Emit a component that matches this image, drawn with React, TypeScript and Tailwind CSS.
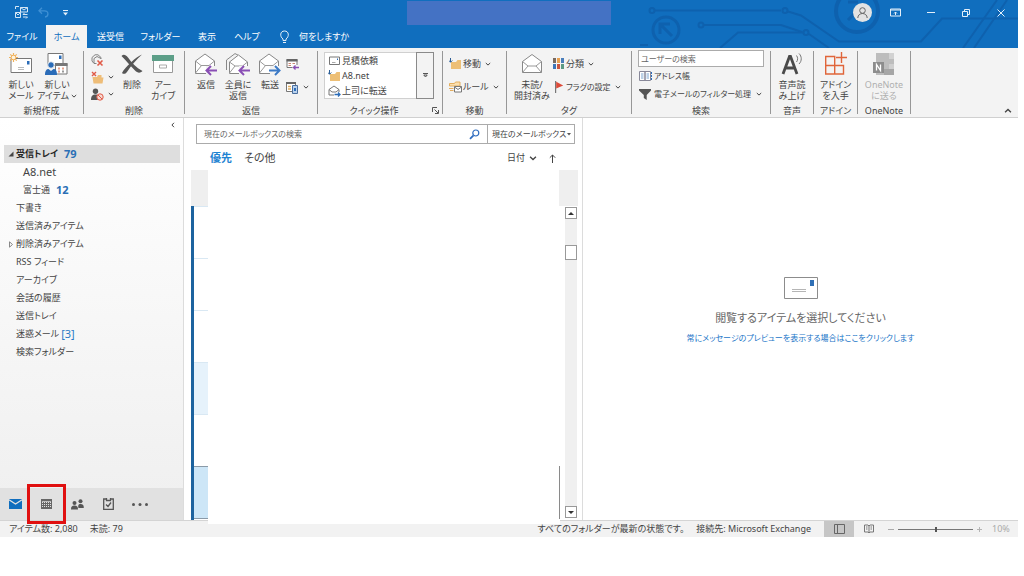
import React from 'react';

const folders = [
  { name: '受信トレイ', count: '79', selected: true, arrow: 'open' },
  { name: 'A8.net', indent: true, latin: true },
  { name: '富士通', count: '12', indent: true },
  { name: '下書き' },
  { name: '送信済みアイテム' },
  { name: '削除済みアイテム', arrow: 'closed' },
  { name: 'RSS フィード' },
  { name: 'アーカイブ' },
  { name: '会話の履歴' },
  { name: '送信トレイ' },
  { name: '迷惑メール', draft: '[3]' },
  { name: '検索フォルダー' },
];

const mailRows = [
  'border-[#d9e8f3]',
  'border-[#d9e8f3]',
  'border-[#d9e8f3]',
  'border-[#d9e8f3] bg-[#e6f2fb]',
  'border-[#d9e8f3]',
  'border-[#8a9aa8] bg-[#cde6f7]',
];

const Chevron: React.FC<{ size?: number }> = ({ size = 6 }) => (
  <svg
    width={size}
    height={size}
    viewBox="0 0 6 6"
    fill="none"
    stroke="#444"
    className="shrink-0"
  >
    <path d="M.8 2 3 4.1 5.2 2" />
  </svg>
);

const Divider = () => <span className="my-[3px] w-px shrink-0 bg-[#979797]" />;

/* icons */

const NewMailIcon = () => (
  <svg width="24" height="22" viewBox="0 0 24 22" fill="none">
    <path d="M2 5.500h20.500v14H2z" fill="#fff" stroke="#777" />
    <path d="M18 8h2.500v3.500H18z" fill="#2b6cb8" />
    <path d="M9 14.500h6M9 16.500h6" stroke="#bbb" />
    <path
      d="M4.500 0v9M0 4.500h9M1.300 1.300l6.400 6.400M7.700 1.300 1.300 7.700"
      stroke="#f0b25c"
      strokeWidth="1.200"
    />
    <circle cx="4.500" cy="4.500" r="2.300" fill="#fff3dc" stroke="#f0b25c" />
  </svg>
);

const NewItemIcon = () => (
  <svg width="24" height="22" viewBox="0 0 24 22" fill="none">
    <path d="M3 .5h15v12H3z" fill="#fff" stroke="#777" />
    <path d="M14 2.500h2.500V6H14z" fill="#2b6cb8" />
    <path d="M10.500 10.500h11.500v10.500H10.500z" fill="#fff" stroke="#777" />
    <path d="M10 10h12.500v3H10z" fill="#777" />
    <path
      d="M13 15.500h2M17 15.500h2M13 18.500h2"
      stroke="#e7a28b"
      strokeWidth="2"
    />
    <path d="M17 18.500h2" stroke="#999" strokeWidth="2" />
    <circle cx="6" cy="12" r="3.300" fill="#2b6cb8" stroke="#f3f3f3" />
    <path d="M0 22c0-5 2-6 3.500-6L6 18l2.500-2c2 0 3.500 1 3.500 6z" fill="#2b6cb8" />
  </svg>
);

const IgnoreIcon = () => (
  <svg width="13" height="13" viewBox="0 0 13 13" fill="none">
    <path
      d="M1 7V3.500L4 .8h3l3 2.700V5M3 9V4.500L6 2.500l4 2M1 7l2 2.500h2.500"
      stroke="#777"
      strokeWidth=".9"
    />
    <path d="m6.500 6.500 5 5M11.500 6.500l-5 5" stroke="#e05a47" strokeWidth="1.600" />
  </svg>
);

const CleanUpIcon = () => (
  <svg width="13" height="13" viewBox="0 0 13 13" fill="none">
    <path d="M1.500 6H6l1-2h3.500v2.500h2l-1 6H2.500z" fill="#eebd78" />
    <path d="m1 1 4 4M5 1 1 5" stroke="#e05a47" strokeWidth="1.400" />
  </svg>
);

const JunkIcon = () => (
  <svg width="13" height="13" viewBox="0 0 13 13" fill="none">
    <circle cx="4.500" cy="3.200" r="2.700" fill="#555" />
    <path d="M0 12c0-4 1.500-5.500 4.500-5.500S8 8 8 12z" fill="#555" />
    <circle cx="9" cy="9" r="3.200" fill="#f6dad4" stroke="#e05a47" />
    <path d="m7 7 4 4" stroke="#e05a47" />
  </svg>
);

const DeleteIcon = () => (
  <svg width="22" height="22" viewBox="0 0 22 22" fill="none">
    <path
      d="M.5 3C2.500 1 4.500 1.500 7 4.500c4 5.500 8 10 14.500 13.500-2.500 2.500-5 2-7.500-.5C9.500 13 5.500 8 .5 3z"
      fill="#565656"
    />
    <path
      d="M21 1.500C15 4 4 14 1 20c1.500 1.500 3.500 1 5-1C9.500 13 15.500 6.500 21 1.500z"
      fill="#565656"
    />
  </svg>
);

const ArchiveIcon = () => (
  <svg width="22" height="22" viewBox="0 0 22 22" fill="none">
    <path d="M1.500 7.500h19v12h-19z" fill="#fff" stroke="#999" />
    <path d="M0 2h22v6H0z" fill="#5d9f88" />
    <path d="M7.500 12h7v3h-7z" fill="#fff" stroke="#aaa" />
  </svg>
);

const Envelope = () => (
  <>
    <path d="M.5 8 10 1l9.500 7v12.500H.5z" fill="#fff" stroke="#888" />
    <path d="m.5 20 6-7.500M19.500 20l-6-7.500M.5 8l5.500 4.500h8L19.500 8" stroke="#999" />
  </>
);

const ReplyIcon = () => (
  <svg width="22" height="23" viewBox="0 0 22 23" fill="none">
    <Envelope />
    <path d="M11 13h11v10H11z" fill="#f3f3f3" />
    <path d="M22 17.500H12M16 13l-4.500 4.500L16 22" stroke="#8a4fb5" strokeWidth="2" />
  </svg>
);

const ReplyAllIcon = () => (
  <svg width="24" height="23" viewBox="0 0 24 23" fill="none">
    <path d="M.5 17V7L9 .6l3 1.500" stroke="#888" />
    <path d="M3.500 9 12.500 2l9 7v11.500h-18z" fill="#fff" stroke="#888" />
    <path d="m3.500 20 5.500-7M3.500 9 9 13h7.500l5-4" stroke="#999" />
    <path d="M13 13h11v10H13z" fill="#f3f3f3" />
    <path d="M24 17.500H14M18 13l-4.500 4.500L18 22" stroke="#8a4fb5" strokeWidth="2" />
  </svg>
);

const ForwardIcon = () => (
  <svg width="22" height="23" viewBox="0 0 22 23" fill="none">
    <Envelope />
    <path d="M11 13h11v10H11z" fill="#f3f3f3" />
    <path d="M10 17.500h10M16 13l4.500 4.500L16 22" stroke="#3c7ac6" strokeWidth="2" />
  </svg>
);

const MeetingIcon = () => (
  <svg width="13" height="13" viewBox="0 0 13 13" fill="none">
    <path d="M1 1.500h10v8H1z" fill="#fff" stroke="#777" />
    <path d="M.5 1h11v2.500H.5z" fill="#666" />
    <path d="M2.500 5.500H5M6.500 5.500H9M2.500 7.500H5" stroke="#c98572" />
    <path d="M6.500 7H13v6H6.500z" fill="#f3f3f3" />
    <path d="M13 9.500H7.500M9.500 7.500l-2 2 2 2" stroke="#8a4fb5" strokeWidth="1.300" />
  </svg>
);

const ReplyMoreIcon = () => (
  <svg width="13" height="13" viewBox="0 0 13 13" fill="none">
    <path d="M.5 1.500h9v9h-9z" fill="#fff" stroke="#777" />
    <path d="M0 1h10v2H0z" fill="#666" />
    <path d="M2 5.500h3M2 8h3" stroke="#e0ad5f" strokeWidth="1.300" />
    <path d="M6.500 4.500h5v8h-5z" fill="#b9d2ee" stroke="#4b6f9e" />
    <path d="M8 7h2v3H8z" fill="#2b6cb8" />
  </svg>
);

const SmallMailIcon = () => (
  <svg width="13" height="12" viewBox="0 0 13 12" fill="none">
    <path d="M1.500 2h10v7.500h-10z" fill="#fff" stroke="#777" />
    <path d="M9 3.500h1v1.500H9z" fill="#2b6cb8" />
    <path d="M4 7.500h3.500" stroke="#aaa" />
  </svg>
);

const MoveIcon = () => (
  <svg width="13" height="12" viewBox="0 0 13 12" fill="none">
    <path d="M2 4h5l1.500-2H12v9H2z" fill="#edbf76" />
    <path d="M1.500 0v4M0 2.500 1.500 4.300 3.300 2.500" stroke="#2b5d96" />
  </svg>
);

const SmallForwardIcon = () => (
  <svg width="13" height="12" viewBox="0 0 13 12" fill="none">
    <path d="M1 4.500 6 1l5 3.500V7M1 4.500V10h5M1 4.500 4 7h4l3-2.500" stroke="#777" />
    <path d="M6.500 9.500H12M10 7.500l2 2-2 2" stroke="#2b6cb8" strokeWidth="1.300" />
  </svg>
);

const RuleIcon = () => (
  <svg width="13" height="12" viewBox="0 0 13 12" fill="none">
    <path d="M.5 2.500h5l1-1.500H11v4H.5z" fill="#fbdfae" stroke="#e4ae5e" />
    <path d="M0 7.500h4.500M1 9.500h3.500" stroke="#e4ae5e" />
    <path d="M5.500 5.500h7v5.500h-7z" fill="#fff" stroke="#777" />
    <path d="m5.500 6 3.500 2.500L12.500 6" stroke="#777" />
  </svg>
);

const UnreadIcon = () => (
  <svg width="22" height="22" viewBox="0 0 22 22" fill="none">
    <path d="M1.500 8.500 11 1.500l9.500 7v11h-19z" fill="#fff" stroke="#888" />
    <path d="M1.500 8.500 7 13h8l5.500-4.500M1.500 19.500 7 13M20.500 19.500 15 13" stroke="#999" />
  </svg>
);

const CategoryIcon = () => (
  <svg width="13" height="12" viewBox="0 0 13 12">
    <path d="M1 0h3v5H1z" fill="#7b6a5e" />
    <path d="M5 0h3v5H5z" fill="#e9a04f" />
    <path d="M9 0h3v5H9z" fill="#4a7ebb" />
    <path d="M1 6h3v5H1z" fill="#3c76b8" />
    <path d="M5 6h3v5H5z" fill="#c9553f" />
    <path d="M9 6h3v5H9z" fill="#5b9a84" />
  </svg>
);

const FlagIcon = () => (
  <svg width="13" height="12" viewBox="0 0 13 12">
    <path d="M3 0h1.200v12H3z" fill="#777" />
    <path d="m4.200.8 7 3.700-7 3z" fill="#dd4b39" />
  </svg>
);

const AddressIcon = () => (
  <svg width="13" height="12" viewBox="0 0 13 12" fill="none">
    <path d="M.5 1.500h5.500v9H.5zM6 1.500h5.500v9H6z" fill="#fff" stroke="#889" />
    <path
      d="M2 4h2.500M2 6h2.500M2 8h2.500M7.500 4H10M7.500 6H10M7.500 8H10"
      stroke="#7ba3cf"
    />
    <path d="M12.500 2v2M12.500 5v2M12.500 8v2" stroke="#2b6cb8" />
  </svg>
);

const FilterIcon = () => (
  <svg width="13" height="12" viewBox="0 0 13 12">
    <path d="M0 1h12v1.500L7.700 7v5L4.800 10V7L0 2.500z" fill="#555" />
  </svg>
);

const ReadAloudIcon = () => (
  <svg width="24" height="24" viewBox="0 0 24 24" fill="none">
    <path
      d="M3 22 9.500 4.500h1L17 22M5.500 16h9"
      stroke="#4a4a4a"
      strokeWidth="2.800"
    />
    <path d="M16.500 3.500c1.500 2 1.500 4.500 0 6.500M19 1.500c3 3 3 7.500 0 10.500" stroke="#777" />
  </svg>
);

const AddinIcon = () => (
  <svg
    width="24"
    height="24"
    viewBox="0 0 24 24"
    fill="none"
    stroke="#e0653a"
    strokeWidth="1.400"
  >
    <path d="M1.700 4.500h9v9h-9zM1.700 13.500h9v8.500h-9zM10.700 13.500h8.800v8.500h-8.800z" />
    <path d="M17.500 0v11M12 5.500h11" />
  </svg>
);

const OneNoteIcon = () => (
  <svg width="24" height="24" viewBox="0 0 24 24" fill="none">
    <path d="M4 1h18v22H4z" fill="#bdbdbd" />
    <path d="M17 1h5v6h-5z" fill="#d2d2d2" />
    <path d="M17 12h5v5h-5z" fill="#cfcfcf" />
    <path d="M12 17h10v6H12z" fill="#a6a6a6" />
    <path d="M1 10h11v11H1z" fill="#8d8d8d" />
    <path d="M4.500 18.500v-6l4 6v-6" stroke="#fff" strokeWidth="1.300" />
  </svg>
);

/* ribbon parts */

type BigButtonProps = {
  icon: React.ReactNode;
  lines: string[];
  className: string;
  menu?: boolean;
};

const BigButton: React.FC<BigButtonProps> = ({ icon, lines, className, menu }) => (
  <button
    className={`flex shrink-0 flex-col items-center whitespace-nowrap pt-0.5 leading-[11px] ${className}`}
  >
    <span className="mb-[3px] flex h-6 items-center justify-center">{icon}</span>
    {lines.map((line, i) => (
      <span key={line} className="flex items-center gap-0.5">
        {line}
        {menu && i === lines.length - 1 && <Chevron />}
      </span>
    ))}
  </button>
);

type SmallButtonProps = {
  icon: React.ReactNode;
  label?: string;
  name?: string;
  menu?: boolean;
  className?: string;
};

const SmallButton: React.FC<SmallButtonProps> = ({
  icon,
  label,
  name,
  menu,
  className = 'gap-px',
}) => (
  <button
    aria-label={name}
    className={`flex h-4 items-center whitespace-nowrap leading-4 ${className}`}
  >
    <span className="shrink-0">{icon}</span>
    {label}
    {menu && (
      <span className="ml-[3px] shrink-0">
        <Chevron />
      </span>
    )}
  </button>
);

type GroupProps = {
  label: string;
  className: string;
  children: React.ReactNode;
  launcher?: boolean;
};

const Group: React.FC<GroupProps> = ({ label, className, children, launcher }) => (
  <>
    <div className={`relative flex shrink-0 flex-col pt-0.5 ${className}`}>
      <div className="flex h-[55px]">{children}</div>
      <div
        className={`whitespace-nowrap text-center leading-3 ${launcher ? 'pr-3' : ''}`}
      >
        {label}
      </div>
      {launcher && (
        <button
          aria-label="クイック操作の管理"
          className="absolute bottom-[3px] right-[3px]"
        >
          <svg width="7" height="7" viewBox="0 0 7 7" fill="none" stroke="#555">
            <path d="M.5 5V.5H5M2.500 2.500l3.500 3.500M6.500 3v3.500H3" />
          </svg>
        </button>
      )}
    </div>
    <Divider />
  </>
);

const TitleBar = () => (
  <header className="relative h-12 overflow-hidden bg-[#106ebe] text-white">
    <svg
      className="absolute right-0 top-0"
      width="378"
      height="48"
      viewBox="0 0 378 48"
      fill="none"
      stroke="#0e61ae"
      strokeWidth="2"
    >
      <circle cx="12" cy="10.500" r="2.500" />
      <path d="M15 10.500h126" />
      <circle cx="145" cy="10.500" r="2.500" />
      <path d="M148 11.500l13 4 38 26h82l21-23h76" />
      <circle cx="61" cy="25" r="2.500" />
      <path d="M64 25h77l21 7" />
      <circle cx="166" cy="32.500" r="2.500" />
      <path d="M80 48l18-15.500h65M169 34l20 14" />
      <circle cx="26" cy="30" r="13" strokeWidth="3" />
      <path d="M32 36 21 25M20 34v-10h10" strokeWidth="3" />
      <circle cx="217" cy="11" r="21" strokeWidth="4" />
      <path d="M208 20l6-6M208 2h10" strokeWidth="3" />
      <path d="M323 48l34-48M334 48l33-48" />
      <path d="M0 45h8" />
    </svg>
    <div className="relative grid h-[25px] grid-cols-[1fr_204px_1fr]">
      <div className="flex items-center pl-[15px]">
        <button aria-label="すべてのフォルダーを送受信">
          <svg width="13" height="13" viewBox="0 0 13 13" fill="none" stroke="#d5e6f5">
            <path d="M.5 3V.5H4M.5 6.500h5v5h-5zM5.500 1.500h7v4.500h-7zM5.500 1.500 9 4l3.500-2.500M.5 6.500 3 9l2.500-2.500M8 8.500h4.500M8 8.500l1.500-1.500M12.500 11H8M12.500 11 11 12.500" />
          </svg>
        </button>
        <button aria-label="元に戻す" className="ml-[10px]">
          <svg
            width="11"
            height="11"
            viewBox="0 0 11 11"
            fill="none"
            stroke="#3f90d4"
            strokeWidth="1.300"
          >
            <path d="M4 .8 1 3.800l3 3M1 3.800h5.500c4.500 0 4.500 6 .5 6.200" />
          </svg>
        </button>
        <button aria-label="クイック アクセスのカスタマイズ" className="ml-[14px]">
          <svg width="5" height="6" viewBox="0 0 5 6" fill="#e4eff9">
            <path d="M0 0h5v1H0zM0 2.500h5L2.500 5.500z" />
          </svg>
        </button>
      </div>
      <div className="mt-px bg-[#4472c4]" />
      <div className="flex items-center justify-end">
        <button aria-label="アカウント" className="flex w-8 justify-center">
          <svg width="19" height="19" viewBox="0 0 19 19" fill="none" stroke="#666">
            <circle cx="9.500" cy="9.500" r="9.500" fill="#e3e3e3" stroke="none" />
            <circle cx="9.500" cy="7.500" r="2.800" />
            <path d="M4.800 15c0-6 9.400-6 9.400 0" />
          </svg>
        </button>
        <button aria-label="リボンの表示オプション" className="flex w-[35px] justify-center">
          <svg width="11" height="9" viewBox="0 0 11 9" fill="none" stroke="#e4eff9">
            <path d="M.5 1h10v7H.5zM.5 2h10M5.500 7V4M4 5.500l1.500-1.500L7 5.500" />
          </svg>
        </button>
        <button aria-label="最小化" className="flex w-[35px] justify-center">
          <svg width="8" height="8" viewBox="0 0 8 8" stroke="#e4eff9">
            <path d="M0 3.500h8" />
          </svg>
        </button>
        <button aria-label="元に戻す (縮小)" className="flex w-[35px] justify-center">
          <svg width="8" height="8" viewBox="0 0 8 8" fill="none" stroke="#e4eff9">
            <path d="M.5 2.500h5v5h-5zM2.500 2V.5h5v5H6" />
          </svg>
        </button>
        <button aria-label="閉じる" className="flex w-[35px] justify-center">
          <svg width="8" height="8" viewBox="0 0 8 8" stroke="#e4eff9">
            <path d="m.5.5 7 7M7.500.5l-7 7" />
          </svg>
        </button>
      </div>
    </div>
    <nav className="relative flex h-[23px] whitespace-nowrap">
      <button className="w-11">ファイル</button>
      <button className="ml-0.5 w-[41px] bg-[#f3f3f3] text-[#106ebe]">ホーム</button>
      <button className="w-[47px]">送受信</button>
      <button className="w-[53px]">フォルダー</button>
      <button className="w-10">表示</button>
      <button className="w-10">ヘルプ</button>
      <button className="ml-3 flex items-center gap-[9px]">
        <svg width="11" height="14" viewBox="0 0 11 14" fill="none" stroke="#e4eff9">
          <path d="M4 10.500V9C.5 6.500 1 1 5.500 1S10.500 6.500 7 9v1.500zM4 12.500h3" />
        </svg>
        何をしますか
      </button>
    </nav>
  </header>
);

const Ribbon = () => (
  <div className="flex h-[70px] border-b border-[#d0d0d0] bg-[#f3f3f3]">
    <Group label="新規作成" className="w-[83px]">
      <BigButton
        icon={<NewMailIcon />}
        lines={['新しい', 'メール']}
        className="ml-1 w-[34px]"
      />
      <BigButton
        icon={<NewItemIcon />}
        lines={['新しい', 'アイテム']}
        className="w-[38px]"
        menu
      />
    </Group>
    <Group label="削除" className="w-[100px]">
      <div className="ml-[7px] flex w-6 flex-col gap-px pt-0.5">
        <SmallButton icon={<IgnoreIcon />} name="無視" />
        <SmallButton icon={<CleanUpIcon />} name="クリーンアップ" menu />
        <SmallButton icon={<JunkIcon />} name="迷惑メール" menu />
      </div>
      <BigButton icon={<DeleteIcon />} lines={['削除']} className="w-[34px]" />
      <BigButton
        icon={<ArchiveIcon />}
        lines={['アー', 'カイブ']}
        className="w-[28px]"
      />
    </Group>
    <Group label="返信" className="w-[132px]">
      <BigButton icon={<ReplyIcon />} lines={['返信']} className="ml-[5px] w-8" />
      <BigButton icon={<ReplyAllIcon />} lines={['全員に', '返信']} className="w-8" />
      <BigButton icon={<ForwardIcon />} lines={['転送']} className="w-8" />
      <div className="flex flex-col gap-[7px] pt-1.5">
        <SmallButton icon={<MeetingIcon />} name="会議" />
        <SmallButton icon={<ReplyMoreIcon />} name="その他" menu />
      </div>
    </Group>
    <Group label="クイック操作" className="w-[124px]" launcher>
      <div className="ml-[6px] mt-0.5 flex h-[47px] w-[110px]">
        <div className="flex flex-1 flex-col border border-r-0 border-[#d0d0d0] bg-white pl-[3px]">
          {[
            { icon: <SmallMailIcon />, label: '見積依頼' },
            { icon: <MoveIcon />, label: 'A8.net' },
            { icon: <SmallForwardIcon />, label: '上司に転送' },
          ].map((item) => (
            <button key={item.label} className="flex h-[15px] items-center gap-px">
              {item.icon}
              {item.label}
            </button>
          ))}
        </div>
        <button
          aria-label="その他のクイック操作"
          className="flex w-[18px] items-center justify-center border border-[#8a8a8a]"
        >
          <svg width="5" height="5" viewBox="0 0 5 5" fill="none" stroke="#555">
            <path d="M0 .5h5M.8 2h3.400L2.500 4z" />
          </svg>
        </button>
      </div>
    </Group>
    <Group label="移動" className="w-[63px]">
      <div className="ml-[6px] flex flex-col gap-[7px] pt-1.5">
        <SmallButton icon={<MoveIcon />} label="移動" menu />
        <SmallButton icon={<RuleIcon />} label="ルール" menu />
      </div>
    </Group>
    <Group label="タグ" className="w-[124px]">
      <BigButton
        icon={<UnreadIcon />}
        lines={['未読/', '開封済み']}
        className="ml-[5px] w-10"
      />
      <div className="flex flex-col gap-[7px] pt-1.5">
        <SmallButton icon={<CategoryIcon />} label="分類" menu />
        <SmallButton
          icon={<FlagIcon />}
          label="フラグの設定"
          className="gap-px text-[8px]"
          menu
        />
      </div>
    </Group>
    <Group label="検索" className="w-[138px]">
      <div className="ml-[6px] flex w-[126px] flex-col text-[8px]">
        <input
          type="text"
          aria-label="ユーザーの検索"
          placeholder="ユーザーの検索"
          className="mb-px h-[17px] w-full border border-[#ababab] bg-white px-0.5 placeholder:text-[#666]"
        />
        <div className="flex flex-col gap-0.5 pl-px">
          <SmallButton icon={<AddressIcon />} label="アドレス帳" className="gap-0.5" />
          <SmallButton
            icon={<FilterIcon />}
            label="電子メールのフィルター処理"
            className="gap-0.5"
            menu
          />
        </div>
      </div>
    </Group>
    <Group label="音声" className="w-[42px]">
      <BigButton
        icon={<ReadAloudIcon />}
        lines={['音声読', 'み上げ']}
        className="w-full"
      />
    </Group>
    <Group label="アドイン" className="w-[43px]">
      <BigButton
        icon={<AddinIcon />}
        lines={['アドイン', 'を入手']}
        className="w-full"
      />
    </Group>
    <Group label="OneNote" className="w-[52px]">
      <BigButton
        icon={<OneNoteIcon />}
        lines={['OneNote', 'に送る']}
        className="w-full text-[#b0b0b0]"
      />
    </Group>
    <div className="flex flex-1 items-end justify-end pb-0.5 pr-[6px]">
      <button aria-label="リボンを折りたたむ" className="rotate-180">
        <Chevron size={8} />
      </button>
    </div>
  </div>
);

const Sidebar = () => (
  <aside className="flex w-[184px] shrink-0 flex-col border-r border-[#dcdcdc] bg-linear-to-b from-white to-[#efefef]">
    <div className="flex h-[27px] justify-end pr-[7px] pt-1">
      <button aria-label="フォルダー ウィンドウの最小化" className="h-[6px] rotate-90">
        <Chevron />
      </button>
    </div>
    <ul className="flex-1 pl-1 pr-[3px]">
      {folders.map((folder) => (
        <li key={folder.name}>
          <button
            className={`flex h-[18px] w-full items-center whitespace-nowrap ${
              folder.selected ? 'bg-[#dedede] font-bold text-[#262626]' : ''
            } ${folder.indent ? 'pl-[19px]' : 'pl-1'}`}
          >
            {!folder.indent && (
              <span className="w-2">
                {folder.arrow === 'open' && (
                  <svg width="6" height="6" viewBox="0 0 6 6">
                    <path d="M5.500.5v5h-5z" fill="#444" />
                  </svg>
                )}
                {folder.arrow === 'closed' && (
                  <svg width="6" height="7" viewBox="0 0 6 7">
                    <path d="M1.500.8v5.400l3-2.700z" fill="none" stroke="#888" />
                  </svg>
                )}
              </span>
            )}
            <span className={folder.latin ? 'text-[11px]' : ''}>{folder.name}</span>
            {folder.count && (
              <span className="ml-[6px] text-[11px] font-bold text-[#2a6fb5]">
                {folder.count}
              </span>
            )}
            {folder.draft && (
              <span className="ml-0.5 text-[11px] text-[#2a7ac5]">{folder.draft}</span>
            )}
          </button>
        </li>
      ))}
    </ul>
    <nav className="relative flex h-8 items-center bg-[#e1e1e1]">
      <button aria-label="メール" className="flex w-[31px] justify-center">
        <svg width="13" height="10" viewBox="0 0 13 10">
          <path d="M0 0h13v10H0z" fill="#106ebe" />
          <path d="M0 .8 6.500 5 13 .8" fill="none" stroke="#e1e1e1" strokeWidth="1.200" />
        </svg>
      </button>
      <button aria-label="予定表" className="flex w-[31px] justify-center">
        <svg width="11" height="10" viewBox="0 0 11 10">
          <path d="M0 0h11v10H0z" fill="#666" />
          <path d="M1 3.500h9M1 5.500h9M1 7.500h9" stroke="#e1e1e1" strokeDasharray="1 1" />
          <path d="M1 2.500h9" stroke="#bbb" />
        </svg>
      </button>
      <button aria-label="連絡先" className="flex w-[31px] justify-center">
        <svg width="13" height="11" viewBox="0 0 13 11" fill="#555">
          <circle cx="9.500" cy="2.300" r="2" />
          <circle cx="3.500" cy="4" r="2" />
          <path d="M7.500 9c-.5-2-.5-4 2-4s3.300 1 3.300 4zM0 10.500c0-3 1-4 3.500-4s3.500 1 3.500 4z" />
        </svg>
      </button>
      <button aria-label="タスク" className="flex w-[31px] justify-center">
        <svg width="11" height="12" viewBox="0 0 11 12" fill="none" stroke="#555">
          <path d="M3 1H.7v10.300h9.600V1H8M3.500 0v2.500h4V0M3 6.500l2 2 3-4" strokeWidth="1.300" />
        </svg>
      </button>
      <button aria-label="その他" className="flex w-[31px] justify-center">
        <svg width="16" height="3" viewBox="0 0 16 3" fill="#555">
          <circle cx="1.500" cy="1.500" r="1.500" />
          <circle cx="8" cy="1.500" r="1.500" />
          <circle cx="14.500" cy="1.500" r="1.500" />
        </svg>
      </button>
      <span className="pointer-events-none absolute -top-1 left-[27px] z-10 h-10 w-[39px] border-[3px] border-[#e01010]" />
    </nav>
  </aside>
);

const MailList = () => (
  <section className="flex w-[399px] shrink-0 flex-col border-r border-[#dcdcdc] pt-[6px]">
    <div className="ml-3 mr-[7px] flex h-5 border border-[#ababab] text-[8px]">
      <input
        type="search"
        aria-label="現在のメールボックスの検索"
        placeholder="現在のメールボックスの検索"
        className="min-w-0 flex-1 px-[7px] placeholder:text-[#666]"
      />
      <button aria-label="検索" className="px-[7px]">
        <svg width="11" height="11" viewBox="0 0 11 11" fill="none" stroke="#2f6dc0">
          <circle cx="6.800" cy="4" r="3" strokeWidth="1.200" />
          <path d="M4.500 6.300 1 9.800" strokeWidth="1.800" />
        </svg>
      </button>
      <div className="relative flex w-[87px] border-l border-[#ababab]">
        <select
          aria-label="検索範囲"
          className="w-full appearance-none overflow-hidden bg-transparent pl-1"
        >
          <option>現在のメールボックス</option>
        </select>
        <svg
          className="pointer-events-none absolute right-[3px] top-2"
          width="4"
          height="3"
          viewBox="0 0 4 3"
        >
          <path d="M0 0h4L2 2.500z" fill="#555" />
        </svg>
      </div>
    </div>
    <div className="flex h-[26px] items-center pl-[26px] pr-[26px] pt-0.5">
      <button className="text-[11px] font-bold text-[#1f83d2]">優先</button>
      <button className="ml-3 text-[11px]">その他</button>
      <button className="ml-auto flex items-center gap-1">
        日付
        <Chevron size={8} />
      </button>
      <button aria-label="昇順" className="ml-3">
        <svg width="7" height="9" viewBox="0 0 7 9" fill="none" stroke="#444">
          <path d="M3.500 9V1M.8 3.700 3.500 1l2.700 2.700" />
        </svg>
      </button>
    </div>
    <div className="relative flex flex-1 justify-between pl-[7px] pr-1">
      <div className="flex w-[17px] flex-col">
        <div className="h-9 bg-[#efefef]" />
        <ul className="flex-1 border-l-[3px] border-[#1d639f]">
          {mailRows.map((row, i) => (
            <li key={i} className={`h-[52px] border-t ${row}`} />
          ))}
          <li className="border-t border-[#8a9aa8]" />
        </ul>
      </div>
      <div className="flex w-[19px] flex-col">
        <div className="h-9 bg-[#efefef]" />
        <div className="flex flex-1 justify-between">
          <span className="mb-px h-[53px] w-px self-end bg-[#8a8a8a]" />
          <div className="mb-0.5 mr-px mt-px flex w-3 flex-col bg-[#f0f0f0]">
            <button
              aria-label="上へスクロール"
              className="flex h-3 items-center justify-center border border-[#999] bg-white"
            >
              <svg width="6" height="3" viewBox="0 0 6 3">
                <path d="M0 3h6L3 0z" fill="#333" />
              </svg>
            </button>
            <div className="mt-[26px] h-[15px] border border-[#999] bg-white" />
            <button
              aria-label="下へスクロール"
              className="mt-auto flex h-3 items-center justify-center border border-[#999] bg-white"
            >
              <svg width="6" height="3" viewBox="0 0 6 3">
                <path d="M0 0h6L3 3z" fill="#333" />
              </svg>
            </button>
          </div>
        </div>
      </div>
      <span className="absolute -bottom-1 left-6 right-[22px] h-1 bg-white" />
    </div>
  </section>
);

const ReadingPane = () => (
  <main className="flex flex-1 flex-col items-center pt-[159px]">
    <svg width="34" height="22" viewBox="0 0 34 22" fill="none">
      <path d="M.5.5h33v21H.5z" fill="#fff" stroke="#8c8c8c" />
      <path d="M26 3h4v6h-4z" fill="#2f6fb5" />
      <path d="M8 12.500h14M8 14.500h14" stroke="#b5b5b5" />
    </svg>
    <p className="mt-[9px] text-[11px] leading-5 text-[#666]">
      閲覧するアイテムを選択してください
    </p>
    <a href="#preview" className="text-[8px] leading-5 text-[#1b76c8]">
      常にメッセージのプレビューを表示する場合はここをクリックします
    </a>
  </main>
);

const StatusBar = () => (
  <footer className="flex h-[17px] items-center whitespace-nowrap border-t border-[#d4d4d4] bg-[#f2f2f2]">
    <span className="ml-[9px]">アイテム数: 2,080</span>
    <span className="ml-3">未読: 79</span>
    <span className="ml-auto">すべてのフォルダーが最新の状態です。</span>
    <span className="ml-3">接続先: Microsoft Exchange</span>
    <button
      aria-label="標準"
      className="ml-[13px] flex w-[30px] items-center justify-center self-stretch bg-[#c6c6c6]"
    >
      <svg width="11" height="10" viewBox="0 0 11 10" fill="none" stroke="#666">
        <path d="M.5.5h10v9H.5zM3.500.5v9" />
      </svg>
    </button>
    <button aria-label="閲覧" className="flex w-[30px] justify-center">
      <svg width="10" height="10" viewBox="0 0 10 10" fill="none" stroke="#777">
        <path d="M.5 1H4l1 1 1-1h3.500v7H6L5 9 4 8H.5zM5 2v7M2 3h1.500M2 5h1.500M6.500 3H8M6.500 5H8" />
      </svg>
    </button>
    <button aria-label="縮小" className="ml-1 mr-1">
      <svg width="6" height="7" viewBox="0 0 6 7" stroke="#aaa">
        <path d="M0 3.500h6" />
      </svg>
    </button>
    <input
      type="range"
      aria-label="ズーム"
      defaultValue={50}
      className="h-px w-[75px] appearance-none bg-[#777] [&::-webkit-slider-thumb]:h-[5px] [&::-webkit-slider-thumb]:w-0.5 [&::-webkit-slider-thumb]:appearance-none [&::-webkit-slider-thumb]:bg-[#555]"
    />
    <button aria-label="拡大" className="ml-[3px]">
      <svg width="7" height="7" viewBox="0 0 7 7" stroke="#b5b5b5">
        <path d="M1 3.500h5M3.500 1v5" />
      </svg>
    </button>
    <span className="ml-[9px] w-[26px] text-[#aaa]">10%</span>
  </footer>
);

const App: React.FC = () => {
  return (
    <div
      lang="ja"
      className="min-h-screen flex flex-col bg-white pb-[39px] pr-[6px] text-[9px] text-[#444] font-['Noto_Sans','Noto_Sans_CJK_JP',sans-serif] [font-feature-settings:'palt']"
    >
      <TitleBar />
      <Ribbon />
      <div className="flex flex-1">
        <Sidebar />
        <MailList />
        <ReadingPane />
      </div>
      <StatusBar />
    </div>
  );
};

export default App;
